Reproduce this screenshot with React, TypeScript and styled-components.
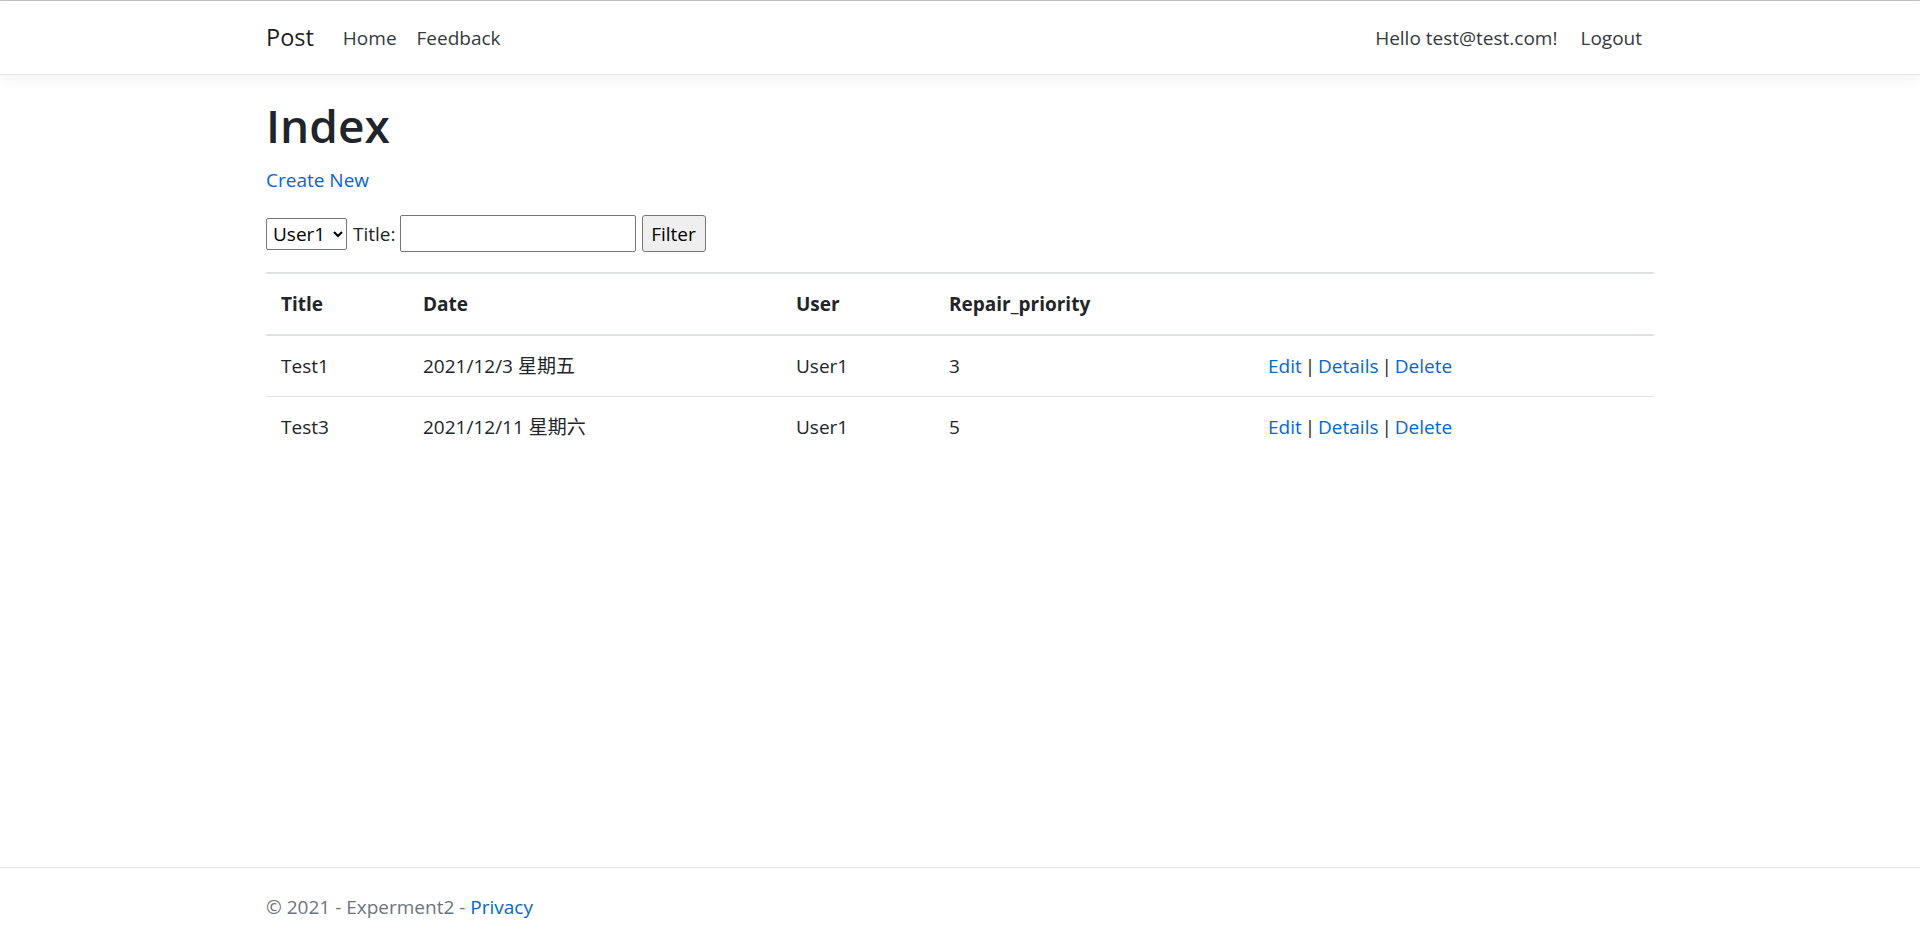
import React from "react";
import styled, { createGlobalStyle } from "styled-components";

const GlobalStyle = createGlobalStyle`
  html, body {
    margin: 0;
    padding: 0;
    background: #ffffff;
  }
  body {
    font-family: "Open Sans", "Noto Sans CJK SC", sans-serif;
    font-size: 19px;
    line-height: 30px;
    color: #212529;
  }
  * { box-sizing: border-box; }
`;

const Page = styled.div`
  min-height: 100vh;
  display: flex;
  flex-direction: column;
  border-top: 1px solid #c2c2c2;
`;

const Container = styled.div`
  width: 1388px;
  margin: 0 auto;
`;

const Navbar = styled.header`
  background: #ffffff;
  border-bottom: 1px solid #e5e5e5;
  box-shadow: 0 5px 15px rgba(0, 0, 0, 0.05);
  height: 74px;
  position: relative;
  z-index: 1;
`;

const NavInner = styled(Container)`
  height: 73px;
  display: flex;
  align-items: center;
`;

const Brand = styled.a`
  font-size: 23.5px;
  line-height: 37px;
  color: rgba(0, 0, 0, 0.9);
  text-decoration: none;
  margin-right: 19px;
`;

const NavList = styled.nav<{ $right?: boolean }>`
  display: flex;
  align-items: center;
  gap: ${(p) => (p.$right ? "3px" : "0")};
  margin-left: ${(p) => (p.$right ? "auto" : "0")};
  margin-right: ${(p) => (p.$right ? "2px" : "0")};
`;

const NavLink = styled.a`
  padding: 0 10px;
  line-height: 30px;
  color: #343a40;
  text-decoration: none;
`;

const Main = styled(Container)`
  flex: 1;
  padding-top: 20px;
`;

const Heading = styled.h1`
  font-size: 46px;
  font-weight: 600;
  line-height: 60px;
  margin: 0 0 10px;
  color: #212529;
`;

const Para = styled.p`
  margin: 0 0 20px;
`;

const Link = styled.a`
  color: #0366d6;
  text-decoration: none;
`;

const FilterForm = styled.form`
  display: flex;
  align-items: center;
  gap: 6px;
  height: 37px;
  margin: 0 0 20px;
`;

const Select = styled.select`
  font-family: inherit;
  font-size: 19px;
  width: 81px;
  height: 32px;
  border: 1px solid #767676;
  border-radius: 2px;
  background: #ffffff;
  color: #000000;
  padding: 0 0 0 2px;
`;

const Label = styled.label`
  color: #212529;
`;

const TextInput = styled.input`
  font-family: inherit;
  font-size: 19px;
  width: 236px;
  height: 37px;
  border: 1px solid #767676;
  border-radius: 2px;
  padding: 1px 3px;
  margin-left: -2px;
`;

const Button = styled.button`
  font-family: inherit;
  font-size: 19px;
  height: 37px;
  width: 64px;
  padding: 0;
  border: 1px solid #767676;
  border-radius: 3px;
  background: #efefef;
  color: #000000;
`;

const Table = styled.table`
  width: 100%;
  border-collapse: collapse;
  color: #212529;
`;

const Th = styled.th<{ $w: number }>`
  width: ${(p) => p.$w}px;
  text-align: left;
  font-weight: 700;
  padding: 15px 15px 15px;
  line-height: 30px;
  border-top: 2px solid #dee2e6;
  border-bottom: 2px solid #dee2e6;
  vertical-align: bottom;
`;

const Td = styled.td`
  padding: 15px;
  line-height: 30px;
  border-top: 1px solid #dee2e6;
  vertical-align: top;
`;

const ActionCell = styled(Td)`
  word-spacing: -2px;
`;

const FirstRow = styled.tr`
  & > td { border-top: none; }
`;

const Row = styled.tr``;

const Sep = styled.span`
  color: #212529;
`;

const Footer = styled.footer`
  border-top: 1px solid #e5e5e5;
  height: 75px;
  color: #6c757d;
`;

const FooterInner = styled(Container)`
  line-height: 78px;
  white-space: nowrap;
`;

const rows = [
  { title: "Test1", date: "2021/12/3 星期五", user: "User1", pr: "3" },
  { title: "Test3", date: "2021/12/11 星期六", user: "User1", pr: "5" },
];

function Actions() {
  return (
    <>
      <Link href="#">Edit</Link> <Sep>|</Sep> <Link href="#">Details</Link>{" "}
      <Sep>|</Sep> <Link href="#">Delete</Link>
    </>
  );
}

export default function App() {
  return (
    <>
      <GlobalStyle />
      <Page>
        <Navbar>
          <NavInner>
            <Brand href="#">Post</Brand>
            <NavList>
              <NavLink href="#">Home</NavLink>
              <NavLink href="#">Feedback</NavLink>
            </NavList>
            <NavList $right>
              <NavLink href="#">Hello test@test.com!</NavLink>
              <NavLink href="#">Logout</NavLink>
            </NavList>
          </NavInner>
        </Navbar>
        <Main>
          <Heading>Index</Heading>
          <Para>
            <Link href="#">Create New</Link>
          </Para>
          <FilterForm onSubmit={(e) => e.preventDefault()}>
            <Select defaultValue="User1">
              <option>User1</option>
              <option>User2</option>
            </Select>
            <Label>Title:</Label>
            <TextInput type="text" />
            <Button type="submit">Filter</Button>
          </FilterForm>
          <Table>
            <thead>
              <tr>
                <Th $w={142}>Title</Th>
                <Th $w={373}>Date</Th>
                <Th $w={153}>User</Th>
                <Th $w={319}>Repair_priority</Th>
                <Th $w={401}></Th>
              </tr>
            </thead>
            <tbody>
              {rows.map((r, i) => {
                const R = i === 0 ? FirstRow : Row;
                return (
                  <R key={r.title}>
                    <Td>{r.title}</Td>
                    <Td>{r.date}</Td>
                    <Td>{r.user}</Td>
                    <Td>{r.pr}</Td>
                    <ActionCell>
                      <Actions />
                    </ActionCell>
                  </R>
                );
              })}
            </tbody>
          </Table>
        </Main>
        <Footer>
          <FooterInner>
            © 2021 - Experment2 - <Link href="#">Privacy</Link>
          </FooterInner>
        </Footer>
      </Page>
    </>
  );
}
